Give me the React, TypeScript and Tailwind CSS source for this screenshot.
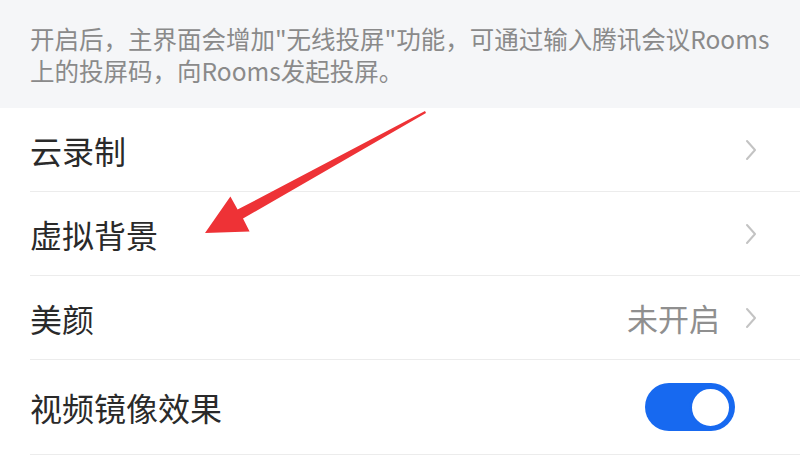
import React from "react";

const font = { fontFamily: '"Noto Sans CJK SC", "Noto Sans", sans-serif' };

function Chevron() {
  return (
    <svg width="14" height="22" viewBox="0 0 14 22" className="shrink-0">
      <polyline points="3,2 11,11 3,20" fill="none" stroke="#c3c3c3" strokeWidth="2" strokeLinecap="round" strokeLinejoin="round" />
    </svg>
  );
}

function Row({ label, right, tall }: { label: string; right: React.ReactNode; tall?: boolean }) {
  return (
    <div className="pl-[30px]">
      <div
        className={`flex items-center justify-between border-b border-[#ececec] pr-[42px] ${tall ? "h-[95px]" : "h-[84px]"}`}
      >
        <span className="text-[32px] text-[#2a2a2a] leading-none">{label}</span>
        {right}
      </div>
    </div>
  );
}

export default function App() {
  return (
    <div className="relative w-[800px] h-[461px] overflow-hidden bg-white" style={font}>
      {/* hint */}
      <div className="h-[108px] bg-[#f5f6f8] pl-[30px] pr-[10px] pt-[23px]">
        <p className="text-[24.5px] leading-[32px] text-[#8a8a8a] whitespace-nowrap">
          开启后，主界面会增加"无线投屏"功能，可通过输入腾讯会议Rooms
          <br />
          上的投屏码，向Rooms发起投屏。
        </p>
      </div>

      <Row label="云录制" right={<Chevron />} />
      <Row label="虚拟背景" right={<Chevron />} />
      <Row
        label="美颜"
        right={
          <div className="flex items-center gap-[24px]">
            <span className="text-[31px] text-[#8f8f8f] leading-none">未开启</span>
            <Chevron />
          </div>
        }
      />
      <Row
        label="视频镜像效果"
        tall
        right={
          <div className="mr-[23px] flex h-[48px] w-[90px] items-center justify-end rounded-full bg-[#1769f0] pr-[3px]">
            <div className="h-[43px] w-[43px] rounded-full border-[3px] border-[#1769f0] bg-white" />
          </div>
        }
      />

      {/* annotation arrow */}
      <svg className="pointer-events-none absolute left-0 top-0" width="800" height="461">
        <polygon
          points="425,111 426,113 243,218.5 249.6,231.5 205,233 230.4,196.5 237.6,209.6"
          fill="#ee3236"
        />
      </svg>
    </div>
  );
}
